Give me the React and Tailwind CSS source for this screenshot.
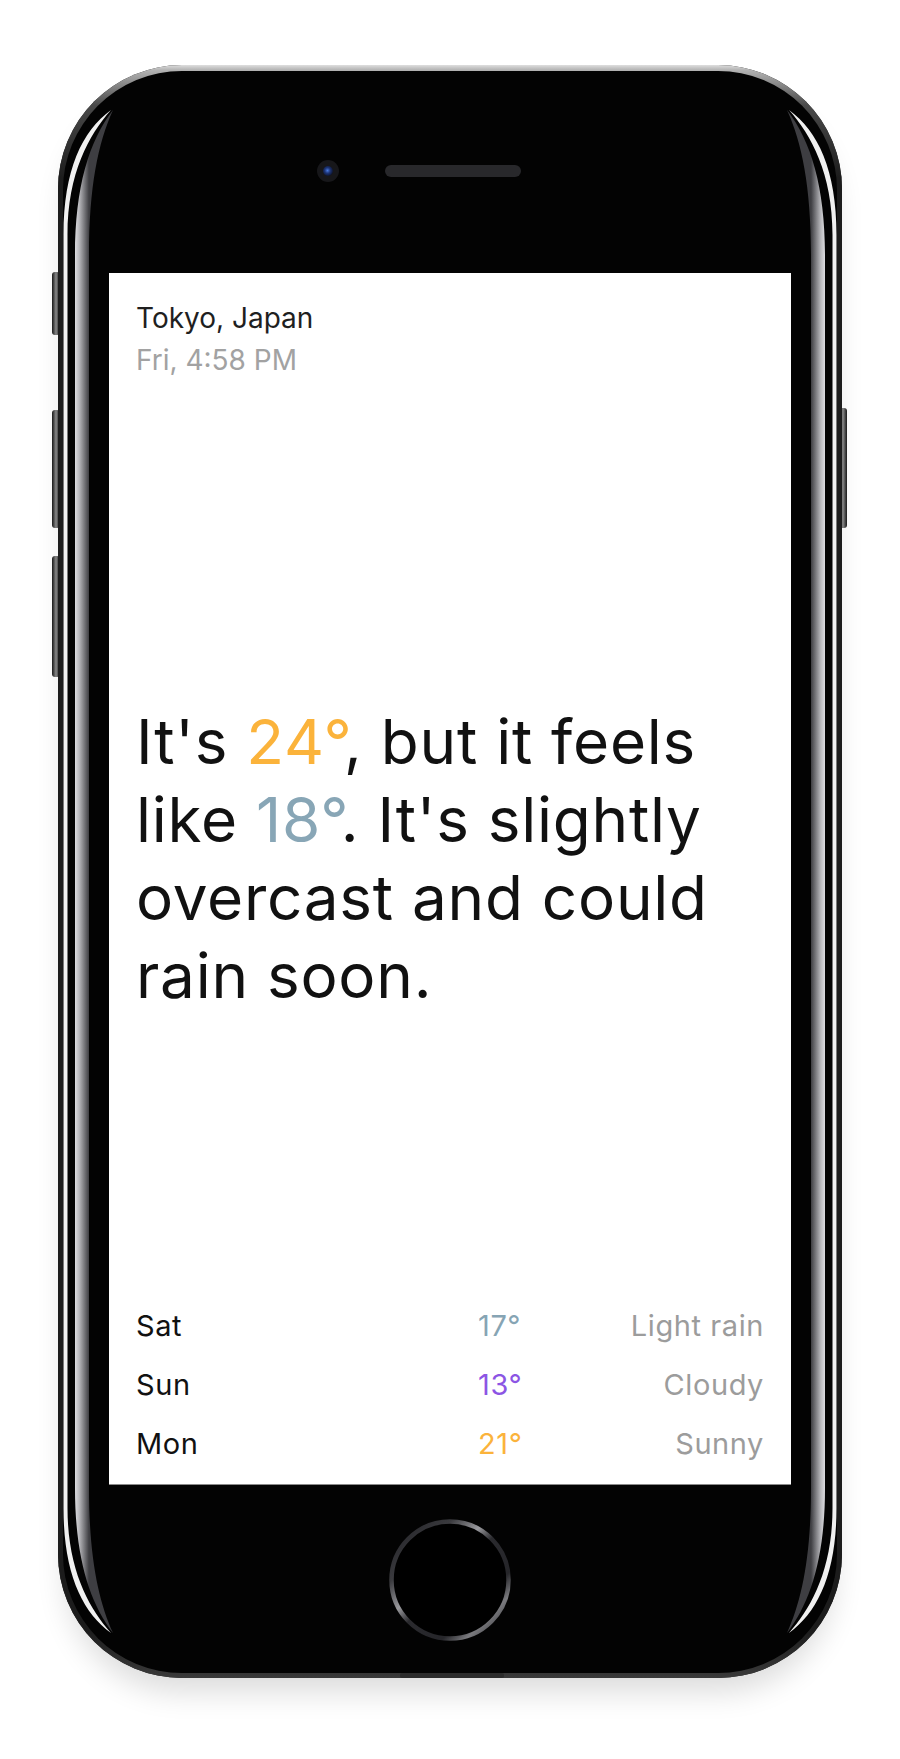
import React from "react";

const forecast = [
  { day: "Sat", temp: "17°", tempColor: "text-[#86a4b4]", desc: "Light rain" },
  { day: "Sun", temp: "13°", tempColor: "text-[#8c55e4]", desc: "Cloudy" },
  { day: "Mon", temp: "21°", tempColor: "text-[#fbb33b]", desc: "Sunny" },
];

// the chrome of the phone: rims, reflections, camera, speaker, home button
function PhoneFrame() {
  const sideWhite =
    "M5.5,1443 L5.5,170 C5.5,105 24,66 53,45 C31,70 9.5,108 9.5,170 L9.5,1443 C9.5,1505 31,1543 53,1568 C24,1547 5.5,1508 5.5,1443 Z";
  const sideBand =
    "M17,1423 L17,190 C17,122 31,76 55,45 C40,78 31,122 31,190 L31,1423 C31,1491 40,1535 55,1568 C31,1537 17,1491 17,1423 Z";

  return (
    <svg
      className="pointer-events-none absolute inset-0"
      width="784"
      height="1613"
      viewBox="0 0 784 1613"
    >
      <defs>
        <linearGradient id="rim" x1="0" y1="0" x2="0" y2="1613" gradientUnits="userSpaceOnUse">
          <stop offset="0" stopColor="#dedede" />
          <stop offset="0.003" stopColor="#b4b4b4" />
          <stop offset="0.025" stopColor="#4a4a4a" />
          <stop offset="0.07" stopColor="#1c1c1c" />
          <stop offset="0.97" stopColor="#1c1c1c" />
          <stop offset="1" stopColor="#3a3a3a" />
        </linearGradient>
        <linearGradient id="band" x1="17" y1="0" x2="31" y2="0" gradientUnits="userSpaceOnUse">
          <stop offset="0" stopColor="#dcdce0" />
          <stop offset="0.3" stopColor="#b8b8bc" />
          <stop offset="1" stopColor="#3e3e42" />
        </linearGradient>
        <linearGradient id="homeRing" x1="0" y1="0" x2="1" y2="1">
          <stop offset="0" stopColor="#1e1e22" />
          <stop offset="0.25" stopColor="#3a3a3e" />
          <stop offset="0.4" stopColor="#9a9a9e" />
          <stop offset="0.5" stopColor="#2a2a2e" />
          <stop offset="0.72" stopColor="#26262a" />
          <stop offset="0.82" stopColor="#7a7a7e" />
          <stop offset="1" stopColor="#1e1e22" />
        </linearGradient>
        <radialGradient id="lens" cx="0.45" cy="0.45" r="0.6">
          <stop offset="0" stopColor="#4a7be0" />
          <stop offset="0.45" stopColor="#1d3579" />
          <stop offset="1" stopColor="#0b1023" />
        </radialGradient>
      </defs>

      <rect x="0" y="0" width="784" height="1613" rx="124" fill="url(#rim)" />
      <rect x="5" y="6" width="774" height="1602" rx="119" fill="#030303" />

      <path d={sideWhite} fill="#f0f0f0" />
      <path d={sideBand} fill="url(#band)" />
      <g transform="matrix(-1 0 0 1 784 0)">
        <path d={sideWhite} fill="#f0f0f0" />
        <path d={sideBand} fill="url(#band)" />
      </g>

      {/* camera + speaker */}
      <circle cx="270" cy="106" r="11" fill="#17171a" />
      <circle cx="270" cy="106" r="5" fill="url(#lens)" />
      <rect x="327" y="100" width="136" height="12" rx="6" fill="#28282b" />

      {/* home button */}
      <circle cx="392" cy="1515" r="58.5" fill="#000" stroke="url(#homeRing)" strokeWidth="4.5" />

      {/* bottom lip */}
      <rect x="342" y="1608" width="104" height="5" rx="2" fill="#2c2c2c" />
    </svg>
  );
}

function SideButton({ className }) {
  return (
    <div
      className={`absolute w-[8px] rounded-[3px] bg-linear-to-r from-[#1a1a1a] via-[#8a8a8a] to-[#1a1a1a] ${className}`}
    />
  );
}

export default function App() {
  return (
    <div className="min-h-screen bg-white pt-[65px] pb-[81px] font-['Inter',sans-serif]">
      <div className="relative mx-auto h-[1613px] w-[784px] rounded-[124px] bg-[#1c1c1c] shadow-[0_22px_30px_-8px_rgba(0,0,0,0.14)]">
        <SideButton className="-left-[6px] top-[207px] h-[63px]" />
        <SideButton className="-left-[6px] top-[345px] h-[118px]" />
        <SideButton className="-left-[6px] top-[491px] h-[121px]" />
        <SideButton className="-right-[5px] top-[343px] h-[120px]" />

        <PhoneFrame />

        <div className="relative flex justify-center pt-[208px]">
          <div className="flex h-[1212px] w-[682px] flex-col border-b border-[#8a8a8a] bg-white pt-[24px] pr-[27px] pb-[11px] pl-[27px]">
            <div className="text-[28px] leading-[42px]">
              <div className="text-[#1f1f1f]">Tokyo, Japan</div>
              <div className="text-[#a2a2a2]">Fri, 4:58 PM</div>
            </div>

            <p className="mt-[322px] text-[62px] leading-[78px] tracking-[0.012em] text-[#111]">
              It's <span className="text-[#fbb33b]">24°</span>, but it feels like{" "}
              <span className="text-[#88a6b6]">18°</span>. It's slightly overcast and could rain soon.
            </p>

            <div className="flex-1" />

            <div>
              {forecast.map((row) => (
                <div
                  key={row.day}
                  className="flex h-[59px] items-center text-[29px] leading-[59px] tracking-[0.02em]"
                >
                  <span className="w-[342px] text-[#111]">{row.day}</span>
                  <span className={row.tempColor}>{row.temp}</span>
                  <span className="ml-auto text-right text-[#9c9c9c]">{row.desc}</span>
                </div>
              ))}
            </div>
          </div>
        </div>
      </div>
    </div>
  );
}
